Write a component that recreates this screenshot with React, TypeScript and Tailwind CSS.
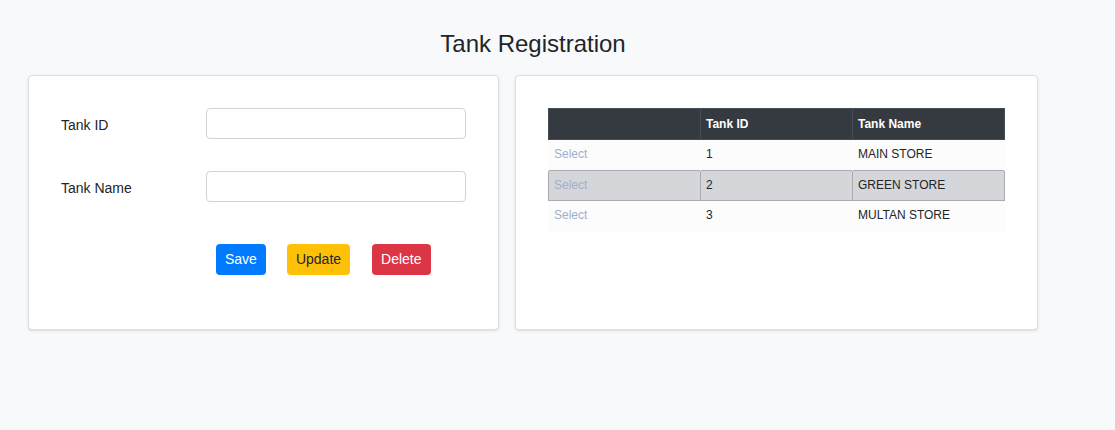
import React from 'react';

const tanks = [
  { id: 1, name: 'MAIN STORE' },
  { id: 2, name: 'GREEN STORE' },
  { id: 3, name: 'MULTAN STORE' },
];

export default function App() {
  return (
    <div className="min-h-[430px] bg-[#f8f9fa] text-[#212529] font-['Liberation_Sans',Arial,sans-serif]">
      <div className="ml-[28px] w-[1010px] pt-[29px]">
        <h1 className="text-center text-[24px] leading-[29px] mb-[17px]">Tank Registration</h1>

        <div className="flex gap-[16px]">
          {/* form card */}
          <div className="w-[471px] h-[255px] bg-white border border-[#dcdfe3] rounded-[4px] shadow-sm px-[32px] pt-[32px]">
            <div className="flex items-center h-[31px]">
              <label className="w-[145px] text-[14px] pt-[4px]">Tank ID</label>
              <input className="w-[260px] h-[31px] border border-[#ced4da] rounded-[4px] px-2 text-[14px] outline-none" />
            </div>
            <div className="flex items-center h-[31px] mt-[32px]">
              <label className="w-[145px] text-[14px] pt-[4px]">Tank Name</label>
              <input className="w-[260px] h-[31px] border border-[#ced4da] rounded-[4px] px-2 text-[14px] outline-none" />
            </div>
            <div className="flex mt-[42px] pl-[155px] gap-[21px]">
              <button className="h-[31px] px-[9px] rounded-[4px] bg-[#007bff] text-white text-[14px]">Save</button>
              <button className="h-[31px] px-[9px] rounded-[4px] bg-[#ffc107] text-[#212529] text-[14px]">Update</button>
              <button className="h-[31px] px-[9px] ml-[1px] rounded-[4px] bg-[#dc3545] text-white text-[14px]">Delete</button>
            </div>
          </div>

          {/* list card */}
          <div className="w-[523px] h-[255px] bg-white border border-[#dcdfe3] rounded-[4px] shadow-sm px-[32px] pt-[32px]">
            <table className="w-[457px] border-collapse text-[12px] table-fixed">
              <thead>
                <tr className="bg-[#343a40] text-white h-[31px]">
                  <th className="w-[152px] border border-[#454d55] text-left font-bold px-[5px]"></th>
                  <th className="w-[152px] border border-[#454d55] text-left font-bold px-[5px]">Tank ID</th>
                  <th className="border border-[#454d55] text-left font-bold px-[5px]">Tank Name</th>
                </tr>
              </thead>
              <tbody>
                {tanks.map((t) => {
                  const active = t.id === 2;
                  const cell = active
                    ? 'border border-[#a9abb0] px-[5px] pb-[2px]'
                    : 'border-x border-[#fcfcfc] px-[5px] pb-[2px]';
                  return (
                    <tr key={t.id} className={active ? 'bg-[#d5d6d9] h-[30px]' : 'bg-[#fcfcfc] h-[31px]'}>
                      <td className={cell + ' text-[#9eb0cc]'}>Select</td>
                      <td className={cell}>{t.id}</td>
                      <td className={cell}>{t.name}</td>
                    </tr>
                  );
                })}
              </tbody>
            </table>
          </div>
        </div>
      </div>
    </div>
  );
}
